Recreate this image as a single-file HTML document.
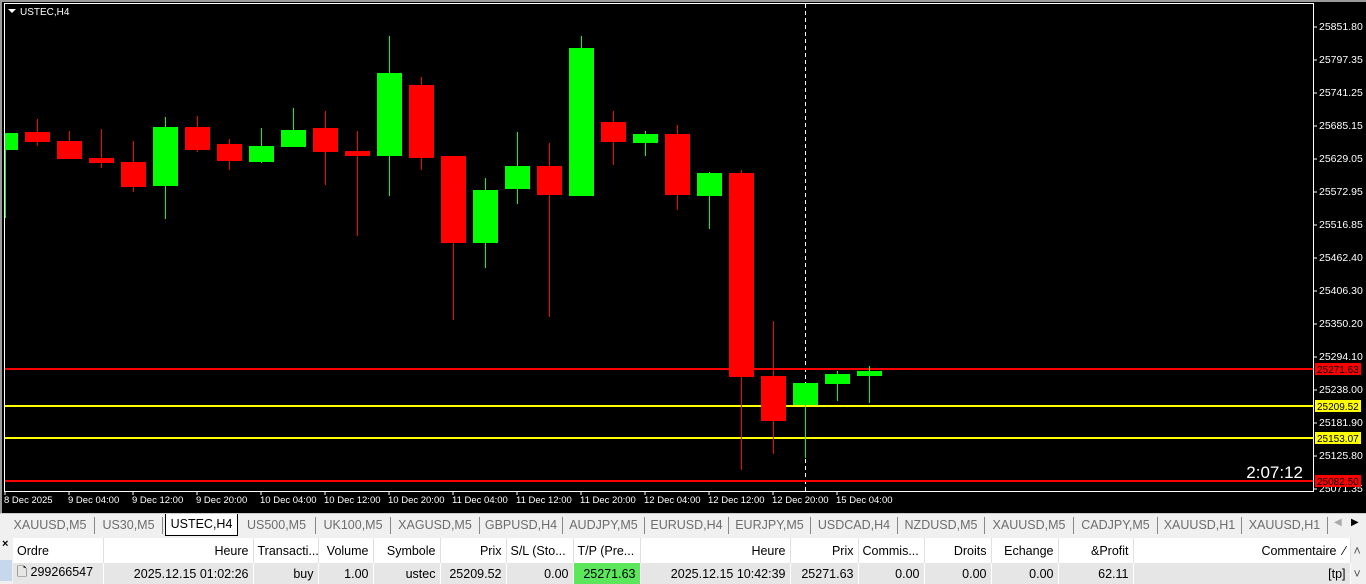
<!DOCTYPE html>
<html><head><meta charset="utf-8"><style>
*{margin:0;padding:0;box-sizing:border-box}
body{width:1366px;height:581px;overflow:hidden;background:#f0f0f0;font-family:"Liberation Sans",sans-serif;position:relative}
svg text{font-family:"Liberation Sans",sans-serif}
.tabs{position:absolute;left:0;top:513px;width:1366px;height:23px;background:#f0f0f0;border-top:1px solid #ccc;font-size:12.5px;color:#6d6d6d}
.tab{position:absolute;top:3px;height:17px;line-height:17px;text-align:center;border-right:1px solid #888}
.act{position:absolute;left:165px;top:0;width:73px;height:22px;background:#fff;border:1px solid #000;border-top:none;color:#000;line-height:20px;text-align:center;font-size:12.5px}
table{position:absolute;left:13px;top:538px;width:1353px;border-collapse:collapse;font-size:12.5px;table-layout:fixed}
td{height:25px;padding:0 4px;white-space:nowrap;overflow:hidden;border-right:1px solid #e0e0e0}
tr.h td{background:#fff;color:#000}
tr.r td{background:#e6e6e6;height:18px;border-right:1px solid #fff}
.rt{text-align:right}
</style></head><body>
<svg width="1366" height="513" style="position:absolute;left:0;top:0" xmlns="http://www.w3.org/2000/svg">
<rect width="1366" height="513" fill="#000"/>
<rect x="0" y="0" width="1366" height="2" fill="#9a9a9a"/>
<rect x="0" y="0" width="2" height="513" fill="#9a9a9a"/>
<rect x="4.5" y="3.5" width="1309" height="488" fill="none" stroke="#fff" stroke-width="1"/>
<line x1="805.5" y1="4" x2="805.5" y2="491" stroke="#fff" stroke-dasharray="4,3"/>
<g stroke-width="2">
<line x1="5" y1="369" x2="1313" y2="369" stroke="#f00"/>
<line x1="5" y1="406" x2="1313" y2="406" stroke="#ff0"/>
<line x1="5" y1="438" x2="1313" y2="438" stroke="#ff0"/>
<line x1="5" y1="481" x2="1313" y2="481" stroke="#f00"/>
</g>
<polygon points="8,9 16,9 12,13" fill="#fff"/>
<text x="20" y="15" fill="#fff" font-size="10">USTEC,H4</text>
<text x="1303" y="478" fill="#fff" font-size="17" text-anchor="end">2:07:12</text>
<g fill="#fff" font-size="10.5">
<text x="1319" y="30">25851.80</text><text x="1319" y="63">25797.35</text><text x="1319" y="96">25741.25</text><text x="1319" y="129">25685.15</text><text x="1319" y="162">25629.05</text><text x="1319" y="195">25572.95</text><text x="1319" y="228">25516.85</text><text x="1319" y="261">25462.40</text><text x="1319" y="294">25406.30</text><text x="1319" y="327">25350.20</text><text x="1319" y="360">25294.10</text><text x="1319" y="393">25238.00</text><text x="1319" y="426">25181.90</text><text x="1319" y="459">25125.80</text><text x="1319" y="492">25071.35</text>
</g>
<g stroke="#fff"><path d="M1313 27h4M1313 60h4M1313 93h4M1313 126h4M1313 159h4M1313 192h4M1313 225h4M1313 258h4M1313 291h4M1313 324h4M1313 357h4M1313 390h4M1313 423h4M1313 456h4M1313 489h4"/></g>
<g font-size="10" fill="#000">
<rect x="1315" y="363" width="46" height="12" fill="#f00"/><text x="1317" y="373">25271.63</text>
<rect x="1315" y="400" width="46" height="12" fill="#ff0"/><text x="1317" y="410">25209.52</text>
<rect x="1315" y="432" width="46" height="12" fill="#ff0"/><text x="1317" y="442">25153.07</text>
<rect x="1315" y="475" width="46" height="12" fill="#f00"/><text x="1317" y="485">25082.50</text>
</g>
<g fill="#fff" font-size="9.5">
<text x="4" y="503">8 Dec 2025</text><text x="68" y="503">9 Dec 04:00</text><text x="132" y="503">9 Dec 12:00</text><text x="196" y="503">9 Dec 20:00</text><text x="260" y="503">10 Dec 04:00</text><text x="324" y="503">10 Dec 12:00</text><text x="388" y="503">10 Dec 20:00</text><text x="452" y="503">11 Dec 04:00</text><text x="516" y="503">11 Dec 12:00</text><text x="580" y="503">11 Dec 20:00</text><text x="644" y="503">12 Dec 04:00</text><text x="708" y="503">12 Dec 12:00</text><text x="772" y="503">12 Dec 20:00</text><text x="836" y="503">15 Dec 04:00</text>
</g>
<g stroke="#fff"><path d="M5 491v4M69 491v4M133 491v4M197 491v4M261 491v4M325 491v4M389 491v4M453 491v4M517 491v4M581 491v4M645 491v4M709 491v4M773 491v4M837 491v4"/></g>
<g id="candles">
<line x1="5.5" y1="133" x2="5.5" y2="218" stroke="#0f0"/><rect x="5" y="133" width="13" height="17" fill="#0f0"/>
<line x1="37.5" y1="119" x2="37.5" y2="146" stroke="#f00"/><rect x="25" y="132" width="25" height="10" fill="#f00"/>
<line x1="69.5" y1="131" x2="69.5" y2="159" stroke="#f00"/><rect x="57" y="141" width="25" height="18" fill="#f00"/>
<line x1="101.5" y1="129" x2="101.5" y2="168" stroke="#f00"/><rect x="89" y="158" width="25" height="5" fill="#f00"/>
<line x1="133.5" y1="141" x2="133.5" y2="192" stroke="#f00"/><rect x="121" y="162" width="25" height="25" fill="#f00"/>
<line x1="165.5" y1="117" x2="165.5" y2="219" stroke="#0f0"/><rect x="153" y="127" width="25" height="59" fill="#0f0"/>
<line x1="197.5" y1="116" x2="197.5" y2="152" stroke="#f00"/><rect x="185" y="127" width="25" height="23" fill="#f00"/>
<line x1="229.5" y1="139" x2="229.5" y2="170" stroke="#f00"/><rect x="217" y="144" width="25" height="17" fill="#f00"/>
<line x1="261.5" y1="128" x2="261.5" y2="163" stroke="#0f0"/><rect x="249" y="146" width="25" height="16" fill="#0f0"/>
<line x1="293.5" y1="108" x2="293.5" y2="147" stroke="#0f0"/><rect x="281" y="130" width="25" height="17" fill="#0f0"/>
<line x1="325.5" y1="111" x2="325.5" y2="185" stroke="#f00"/><rect x="313" y="128" width="25" height="24" fill="#f00"/>
<line x1="357.5" y1="131" x2="357.5" y2="236" stroke="#f00"/><rect x="345" y="151" width="25" height="5" fill="#f00"/>
<line x1="389.5" y1="36" x2="389.5" y2="196" stroke="#0f0"/><rect x="377" y="73" width="25" height="83" fill="#0f0"/>
<line x1="421.5" y1="77" x2="421.5" y2="170" stroke="#f00"/><rect x="409" y="85" width="25" height="73" fill="#f00"/>
<line x1="453.5" y1="156" x2="453.5" y2="320" stroke="#f00"/><rect x="441" y="156" width="25" height="87" fill="#f00"/>
<line x1="485.5" y1="178" x2="485.5" y2="268" stroke="#0f0"/><rect x="473" y="190" width="25" height="53" fill="#0f0"/>
<line x1="517.5" y1="132" x2="517.5" y2="204" stroke="#0f0"/><rect x="505" y="166" width="25" height="23" fill="#0f0"/>
<line x1="549.5" y1="143" x2="549.5" y2="317" stroke="#f00"/><rect x="537" y="166" width="25" height="29" fill="#f00"/>
<line x1="581.5" y1="36" x2="581.5" y2="196" stroke="#0f0"/><rect x="569" y="48" width="25" height="148" fill="#0f0"/>
<line x1="613.5" y1="111" x2="613.5" y2="165" stroke="#f00"/><rect x="601" y="122" width="25" height="20" fill="#f00"/>
<line x1="645.5" y1="131" x2="645.5" y2="156" stroke="#0f0"/><rect x="633" y="134" width="25" height="9" fill="#0f0"/>
<line x1="677.5" y1="125" x2="677.5" y2="210" stroke="#f00"/><rect x="665" y="134" width="25" height="61" fill="#f00"/>
<line x1="709.5" y1="172" x2="709.5" y2="229" stroke="#0f0"/><rect x="697" y="173" width="25" height="23" fill="#0f0"/>
<line x1="741.5" y1="170" x2="741.5" y2="470" stroke="#f00"/><rect x="729" y="173" width="25" height="204" fill="#f00"/>
<line x1="773.5" y1="321" x2="773.5" y2="454" stroke="#f00"/><rect x="761" y="376" width="25" height="45" fill="#f00"/>
<line x1="805.5" y1="383" x2="805.5" y2="458" stroke="#0f0"/><rect x="793" y="383" width="25" height="22" fill="#0f0"/>
<line x1="837.5" y1="371" x2="837.5" y2="401" stroke="#0f0"/><rect x="825" y="374" width="25" height="10" fill="#0f0"/>
<line x1="869.5" y1="366" x2="869.5" y2="403" stroke="#0f0"/><rect x="857" y="371" width="25" height="5" fill="#0f0"/>
</g>
</svg>
<div class="tabs">
<div class="tab" style="left:6px;width:89px">XAUUSD,M5</div>
<div class="tab" style="left:95px;width:68px">US30,M5</div>
<div class="tab" style="left:238px;width:78px">US500,M5</div>
<div class="tab" style="left:316px;width:75px">UK100,M5</div>
<div class="tab" style="left:391px;width:89px">XAGUSD,M5</div>
<div class="tab" style="left:480px;width:83px">GBPUSD,H4</div>
<div class="tab" style="left:563px;width:82px">AUDJPY,M5</div>
<div class="tab" style="left:645px;width:84px">EURUSD,H4</div>
<div class="tab" style="left:729px;width:82px">EURJPY,M5</div>
<div class="tab" style="left:811px;width:87px">USDCAD,H4</div>
<div class="tab" style="left:898px;width:87px">NZDUSD,M5</div>
<div class="tab" style="left:985px;width:89px">XAUUSD,M5</div>
<div class="tab" style="left:1074px;width:84px">CADJPY,M5</div>
<div class="tab" style="left:1158px;width:84px">XAUUSD,H1</div>
<div class="tab" style="left:1242px;width:86px">XAUUSD,H1</div>
<div style="position:absolute;left:1334px;top:3px;font-size:10px;color:#aaa">◀</div>
<div style="position:absolute;left:1351px;top:3px;font-size:10px;color:#000">▶</div>
<div class="act">USTEC,H4</div>
</div>
<div style="position:absolute;left:0;top:536px;width:13px;height:45px;background:#f0f0f0"></div>
<div style="position:absolute;left:2px;top:538px;font-size:11px;font-weight:bold">×</div>
<div style="position:absolute;left:0;top:560px;width:12px;height:21px;background:#c8d8ec"></div>
<table>
<colgroup><col style="width:90px"><col style="width:150px"><col style="width:65px"><col style="width:55px"><col style="width:67px"><col style="width:66px"><col style="width:67px"><col style="width:67px"><col style="width:150px"><col style="width:68px"><col style="width:66px"><col style="width:67px"><col style="width:67px"><col style="width:75px"><col style="width:217px"><col style="width:16px"></colgroup>
<tr class="h"><td>Ordre</td><td class="rt">Heure</td><td>Transacti...</td><td class="rt">Volume</td><td class="rt">Symbole</td><td class="rt">Prix</td><td>S/L (Sto...</td><td>T/P (Pre...</td><td class="rt">Heure</td><td class="rt">Prix</td><td>Commis...</td><td class="rt">Droits</td><td class="rt">Echange</td><td class="rt">&amp;Profit</td><td class="rt">Commentaire &nbsp;⁄</td><td style="background:#f0f0f0;color:#555;padding:0 3px">˄</td></tr>
<tr class="r"><td>🗋 299266547</td><td class="rt">2025.12.15 01:02:26</td><td class="rt">buy</td><td class="rt">1.00</td><td class="rt">ustec</td><td class="rt">25209.52</td><td class="rt">0.00</td><td class="rt" style="background:#5ce65c">25271.63</td><td class="rt">2025.12.15 10:42:39</td><td class="rt">25271.63</td><td class="rt">0.00</td><td class="rt">0.00</td><td class="rt">0.00</td><td class="rt">62.11</td><td class="rt">[tp]</td><td style="background:#f0f0f0;color:#555;padding:0 3px">˅</td></tr>
</table>
</body></html>
